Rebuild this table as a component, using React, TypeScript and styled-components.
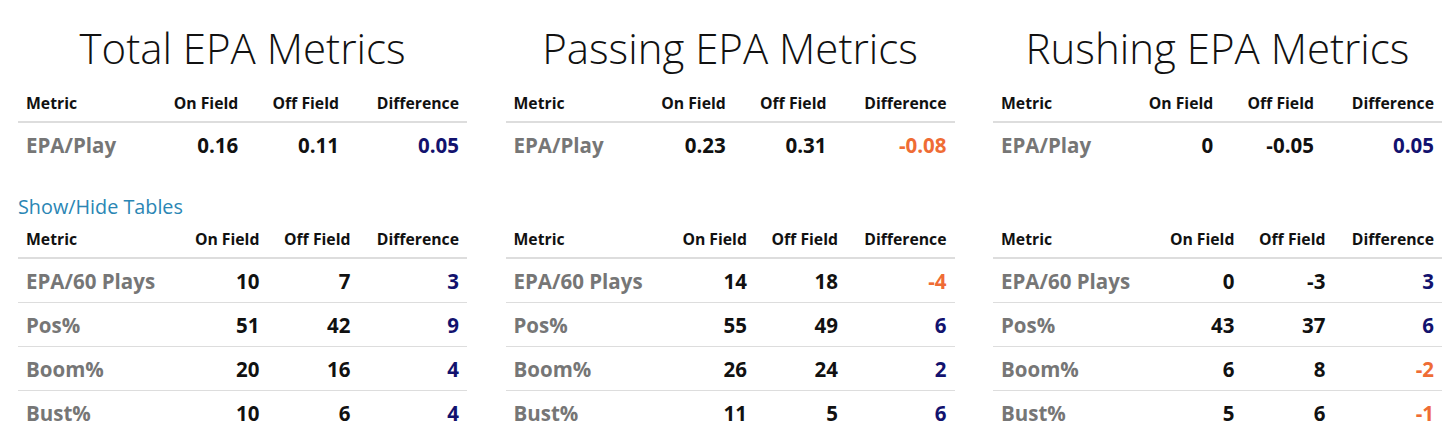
import styled, { createGlobalStyle } from "styled-components";

const GlobalStyle = createGlobalStyle`
  body {
    margin: 0;
    background: #fff;
    font-family: "Open Sans", "Liberation Sans", sans-serif;
    color: #111;
  }
`;

const Page = styled.div`
  display: grid;
  grid-template-columns: repeat(3, 449px);
  column-gap: 38.5px;
  padding: 25px 0 0 18px;
`;

const Column = styled.section`
  display: flex;
  flex-direction: column;
`;

const Title = styled.h2`
  margin: 0 0 14px;
  font-size: 42px;
  font-weight: 300;
  line-height: 46px;
  text-align: center;
  color: #111;
`;

const Table = styled.table<{ $gap?: boolean }>`
  width: 100%;
  border-collapse: collapse;
  margin-bottom: ${(p) => (p.$gap ? "27px" : "0")};

  th {
    padding: 8px;
    font-size: 15.75px;
    font-weight: 700;
    line-height: 20px;
    text-align: right;
    color: #111;
    border-bottom: 2px solid #ddd;
    white-space: nowrap;
  }

  th:first-child {
    text-align: left;
  }

  td {
    padding: 9px 8px 7px;
    font-size: 20.5px;
    font-weight: 700;
    line-height: 27px;
    text-align: right;
    color: #111;
    border-top: 1px solid #ddd;
    white-space: nowrap;
  }

  tbody tr:first-child td {
    border-top: 0;
  }
`;

const MetricCell = styled.td`
  && {
    text-align: left;
    color: #767676;
  }
`;

const DiffCell = styled.td<{ $neg: boolean }>`
  && {
    color: ${(p) => (p.$neg ? "#ef6c35" : "#12126e")};
  }
`;

const Toggle = styled.a`
  display: block;
  height: 28px;
  font-size: 19.8px;
  line-height: 28px;
  color: #2a86b4;
  text-decoration: none;
  cursor: pointer;
`;

const Spacer = styled.div`
  height: 28px;
`;

type Row = [string, string, string, string];

const MetricTable = ({ rows, gap }: { rows: Row[]; gap?: boolean }) => (
  <Table $gap={gap}>
    <thead>
      <tr>
        <th>Metric</th>
        <th>On Field</th>
        <th>Off Field</th>
        <th>Difference</th>
      </tr>
    </thead>
    <tbody>
      {rows.map(([name, on, off, diff]) => (
        <tr key={name}>
          <MetricCell>{name}</MetricCell>
          <td>{on}</td>
          <td>{off}</td>
          <DiffCell $neg={diff.startsWith("-")}>{diff}</DiffCell>
        </tr>
      ))}
    </tbody>
  </Table>
);

const sections: { title: string; play: Row; detail: Row[]; toggle?: boolean }[] = [
  {
    title: "Total EPA Metrics",
    play: ["EPA/Play", "0.16", "0.11", "0.05"],
    detail: [
      ["EPA/60 Plays", "10", "7", "3"],
      ["Pos%", "51", "42", "9"],
      ["Boom%", "20", "16", "4"],
      ["Bust%", "10", "6", "4"],
    ],
    toggle: true,
  },
  {
    title: "Passing EPA Metrics",
    play: ["EPA/Play", "0.23", "0.31", "-0.08"],
    detail: [
      ["EPA/60 Plays", "14", "18", "-4"],
      ["Pos%", "55", "49", "6"],
      ["Boom%", "26", "24", "2"],
      ["Bust%", "11", "5", "6"],
    ],
  },
  {
    title: "Rushing EPA Metrics",
    play: ["EPA/Play", "0", "-0.05", "0.05"],
    detail: [
      ["EPA/60 Plays", "0", "-3", "3"],
      ["Pos%", "43", "37", "6"],
      ["Boom%", "6", "8", "-2"],
      ["Bust%", "5", "6", "-1"],
    ],
  },
];

export default function App() {
  return (
    <>
      <GlobalStyle />
      <Page>
        {sections.map((s) => (
          <Column key={s.title}>
            <Title>{s.title}</Title>
            <MetricTable rows={[s.play]} gap />
            {s.toggle ? <Toggle>Show/Hide Tables</Toggle> : <Spacer />}
            <MetricTable rows={s.detail} />
          </Column>
        ))}
      </Page>
    </>
  );
}
